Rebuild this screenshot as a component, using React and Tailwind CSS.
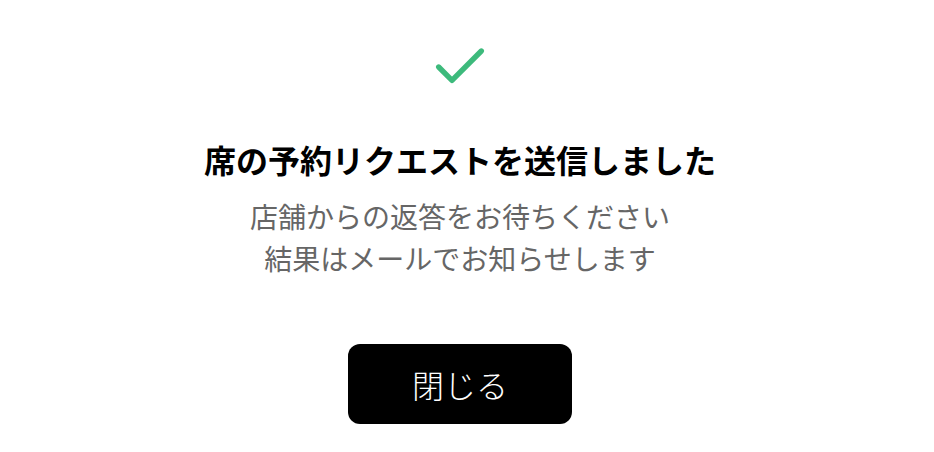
import React from 'react';
import { Check } from 'lucide-react';

const App = () => {
  return (
    <div
      className="min-h-screen bg-white"
      style={{ fontFamily: '"Noto Sans CJK JP", "Noto Sans", sans-serif' }}
    >
      <div className="w-[920px] flex flex-col items-center pt-[35px]">
        {/* Success icon */}
        <Check className="h-16 w-16 text-[#3dba7c]" strokeWidth={2} />

        {/* Title */}
        <h1 className="mt-[40px] text-[32px] leading-[40px] font-bold text-black">
          席の予約リクエストを送信しました
        </h1>

        {/* Message */}
        <p className="mt-[16px] text-center text-[28px] leading-[42px] text-[#666666]">
          店舗からの返答をお待ちください
          <br />
          結果はメールでお知らせします
        </p>

        {/* Close button */}
        <button className="mt-[65px] w-[224px] h-[80px] rounded-xl bg-black text-white text-[32px] font-light">
          閉じる
        </button>
      </div>
    </div>
  );
};

export default App;
